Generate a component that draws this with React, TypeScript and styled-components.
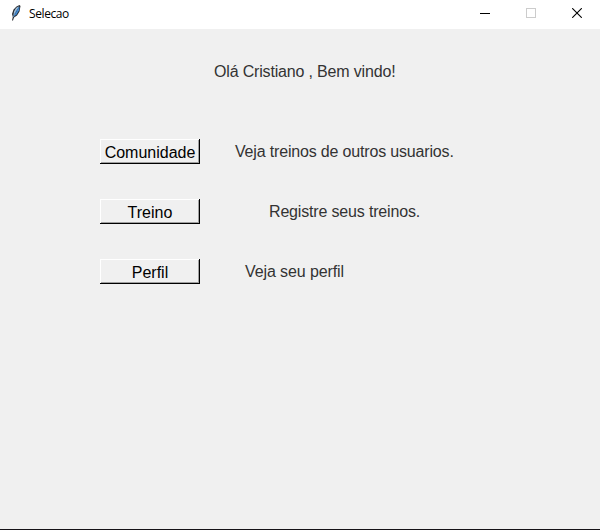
import React from "react";
import styled, { createGlobalStyle } from "styled-components";

const GlobalStyle = createGlobalStyle`
  * { box-sizing: border-box; }
  body { margin: 0; overflow: hidden; background: #f0f0f0; }
`;

const Window = styled.div`
  width: 600px;
  height: 530px;
  display: flex;
  flex-direction: column;
  background: #f0f0f0;
  border-bottom: 1px solid #151217;
  font-family: "Liberation Sans", Arial, sans-serif;
`;

const TitleBar = styled.header`
  height: 29px;
  flex: none;
  display: flex;
  align-items: flex-start;
  background: #fff;
`;

const Feather = styled.svg`
  width: 16px;
  height: 16px;
  margin: 5px 5px 0 8px;
`;

const Title = styled.span`
  flex: 1;
  padding-top: 1px;
  font: 12px/26px "Open Sans", "Noto Sans", sans-serif;
  letter-spacing: -0.4px;
  color: #000;
`;

const WindowControl = styled.button<{ $disabled?: boolean }>`
  width: 46px;
  height: 26px;
  padding: 0;
  display: flex;
  align-items: center;
  justify-content: center;
  border: 0;
  background: none;
  color: ${(p) => (p.$disabled ? "#ccc" : "#000")};
`;

const Content = styled.main`
  flex: 1;
  padding-left: 100px;
`;

const Label = styled.p<{ $indent: number; $spacing?: number }>`
  margin: 0 0 0 ${(p) => p.$indent}px;
  font-size: 16px;
  line-height: 25px;
  letter-spacing: ${(p) => p.$spacing ?? 0}px;
  white-space: nowrap;
  color: #333;
`;

const Greeting = styled.div`
  padding-top: 30px;
  height: 110px;
`;

const Menu = styled.div`
  display: grid;
  row-gap: 35px;
`;

const Row = styled.div`
  display: flex;
  height: 25px;
`;

const RaisedButton = styled.button`
  width: 100px;
  height: 25px;
  padding: 2px 0 0;
  border: 0;
  background: #f0f0f0;
  box-shadow: inset -1px -1px #000, inset 1px 1px #fff, inset -2px -2px #a0a0a0;
  font: 16px/23px "Liberation Sans", Arial, sans-serif;
  color: #000;
`;

const items = [
  { name: "Comunidade", text: "Veja treinos de outros usuarios.", indent: 35, spacing: -0.17 },
  { name: "Treino", text: "Registre seus treinos.", indent: 69, spacing: -0.17 },
  { name: "Perfil", text: "Veja seu perfil", indent: 45, spacing: -0.1 },
];

export default function App() {
  return (
    <>
      <GlobalStyle />
      <Window>
        <TitleBar>
          <Feather viewBox="0 0 16 16">
            <path d="M11.5 0 8.5 1.5 5.5 4.5 4 9l.8 3L4 15.5h1L6 12.5 9 10.5l2.5-4L12.5 1Z" fill="#25282e" />
            <path d="M11 1 8 3 6 6.5 5.3 11 8 6Z" fill="#a9bfd2" />
            <path d="m11.6 1.2-.6 4.3L8.5 9.5 6 11.5 8.5 6Z" fill="#3f8ad4" />
            <path d="M10.5 2 7.5 6.5 5.5 12" fill="none" stroke="#76b2ec" strokeWidth=".8" />
          </Feather>
          <Title>Selecao</Title>
          <WindowControl aria-label="Minimizar">
            <svg width="10" height="10" shapeRendering="crispEdges"><path d="M0 5h10v1H0z" fill="currentColor" /></svg>
          </WindowControl>
          <WindowControl $disabled aria-label="Maximizar">
            <svg width="10" height="10"><rect x=".5" y=".5" width="9" height="9" fill="none" stroke="currentColor" /></svg>
          </WindowControl>
          <WindowControl aria-label="Fechar">
            <svg width="10" height="10"><path d="m.2.2 9.6 9.6M9.8.2.2 9.8" fill="none" stroke="currentColor" strokeWidth="1.1" /></svg>
          </WindowControl>
        </TitleBar>
        <Content>
          <Greeting>
            <Label $indent={114} $spacing={-0.17}>Olá Cristiano , Bem vindo!</Label>
          </Greeting>
          <Menu>
            {items.map((item) => (
              <Row key={item.name}>
                <RaisedButton>{item.name}</RaisedButton>
                <Label $indent={item.indent} $spacing={item.spacing}>{item.text}</Label>
              </Row>
            ))}
          </Menu>
        </Content>
      </Window>
    </>
  );
}
